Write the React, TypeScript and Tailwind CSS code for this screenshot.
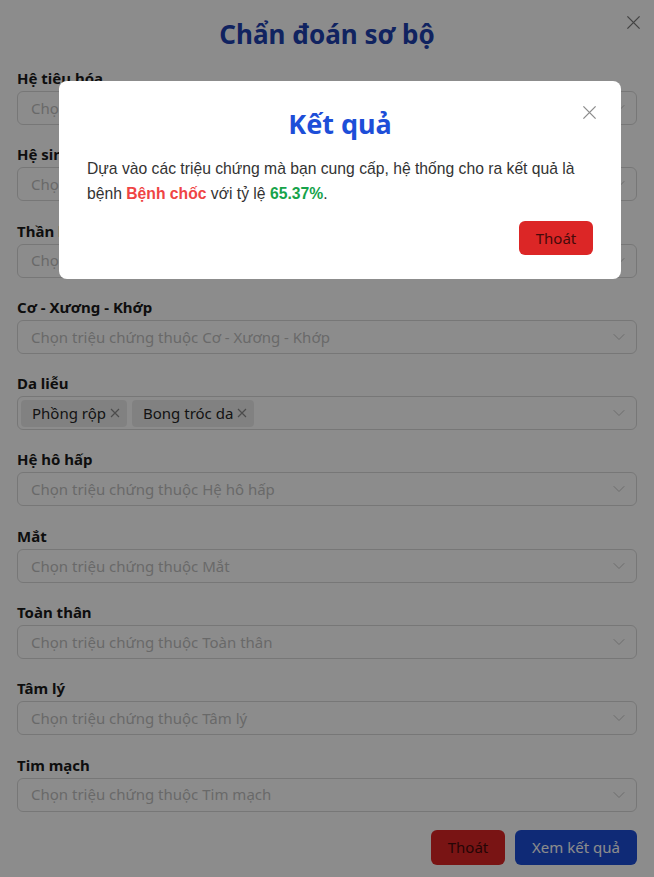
import { ChevronDown } from "lucide-react";

const groups = [
  { name: "Hệ tiêu hóa", tags: [] as string[] },
  { name: "Hệ sinh dục", tags: [] as string[] },
  { name: "Thần kinh", tags: [] as string[] },
  { name: "Cơ - Xương - Khớp", tags: [] as string[] },
  { name: "Da liễu", tags: ["Phồng rộp", "Bong tróc da"] },
  { name: "Hệ hô hấp", tags: [] as string[] },
  { name: "Mắt", tags: [] as string[] },
  { name: "Toàn thân", tags: [] as string[] },
  { name: "Tâm lý", tags: [] as string[] },
  { name: "Tim mạch", tags: [] as string[] },
];

const CloseIcon = ({ className }: { className?: string }) => (
  <svg viewBox="0 0 16 16" className={className} fill="none" stroke="currentColor" strokeWidth="1.4">
    <path d="M1.5 1.5 L14.5 14.5 M14.5 1.5 L1.5 14.5" />
  </svg>
);

const TagClose = () => (
  <svg viewBox="0 0 10 10" className="w-[10px] h-[10px] text-[#8a8a8a]" fill="none" stroke="currentColor" strokeWidth="1.2">
    <path d="M1 1 L9 9 M9 1 L1 9" />
  </svg>
);

// 1 dòng chọn triệu chứng
const SymptomSelect = ({ name, tags }: { name: string; tags: string[] }) => (
  <div className="mb-[18.3px]">
    <div className="text-[15px] font-bold leading-[22px] text-[#1a1a1a] mb-[2px]">{name}</div>
    <div className="h-[34px] w-full border border-[#d9d9d9] rounded-md flex items-center justify-between pr-[7px]">
      {tags.length > 0 ? (
        <div className="flex items-center gap-[5px] pl-[3px]">
          {tags.map((t) => (
            <span
              key={t}
              className="h-[27px] flex items-center gap-[4px] pl-[11px] pr-[7px] bg-[#ececec] rounded text-[15px] text-[#262626]"
            >
              {t}
              <TagClose />
            </span>
          ))}
        </div>
      ) : (
        <span className="pl-[13px] text-[15px] text-[#bfbfbf]">Chọn triệu chứng thuộc {name}</span>
      )}
      <ChevronDown className="w-[20px] h-[20px] text-[#bfbfbf]" strokeWidth={1.1} />
    </div>
  </div>
);

export default function App() {
  return (
    <div className="relative w-full h-[877px] overflow-hidden bg-white font-['Noto_Sans',sans-serif]">
      {/* Modal chẩn đoán */}
      <div className="px-[17px] pt-[16px]">
        <div className="relative">
          <h1 className="text-center text-[26px] font-bold leading-[36px] text-[#1e40af]">Chẩn đoán sơ bộ</h1>
          <button className="absolute right-[-4px] top-[-1px] text-[#7a7a7a]">
            <CloseIcon className="w-[15px] h-[15px]" />
          </button>
        </div>
        <div className="mt-[15px]">
          {groups.map((g) => (
            <SymptomSelect key={g.name} name={g.name} tags={g.tags} />
          ))}
        </div>
        <div className="flex justify-end gap-[10px] mt-[1px]">
          <button className="w-[74px] h-[35px] rounded-md bg-[#dc2626] text-[15px] text-[#450a0a]">Thoát</button>
          <button className="w-[122px] h-[35px] rounded-md bg-[#1d4ed8] text-[15px] text-white">Xem kết quả</button>
        </div>
      </div>

      {/* Overlay */}
      <div className="absolute inset-0 bg-black/45 flex justify-start items-start pt-[81px] pl-[59px]">
        <div className="relative w-[562px] bg-white rounded-lg px-7 pt-[25px] pb-[24px]">
          <button className="absolute right-[24px] top-[24px] text-[#8c8c8c]">
            <CloseIcon className="w-[15px] h-[15px]" />
          </button>
          <h2 className="text-center text-[27px] font-bold leading-[36px] text-[#1d4ed8]">Kết quả</h2>
          <p className="mt-[14px] text-[15.7px] leading-[25px] text-[#333] font-['Liberation_Sans',Arial,sans-serif]">
            Dựa vào các triệu chứng mà bạn cung cấp, hệ thống cho ra kết quả là bệnh{" "}
            <span className="font-bold text-[#ef4444]">Bệnh chốc</span> với tỷ lệ{" "}
            <span className="font-bold text-[#16a34a]">65.37%</span>.
          </p>
          <div className="flex justify-end mt-[15px]">
            <button className="w-[74px] h-[34px] rounded-md bg-[#dc2626] text-[15px] text-[#450a0a]">Thoát</button>
          </div>
        </div>
      </div>
    </div>
  );
}
